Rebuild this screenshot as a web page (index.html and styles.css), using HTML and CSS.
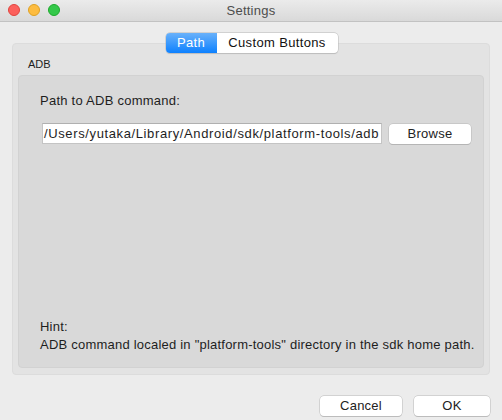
FILE: index.html
```html
<!DOCTYPE html>
<html>
<head>
<meta charset="utf-8">
<link rel="stylesheet" href="styles.css">
</head>
<body>
<div class="window">
  <div class="titlebar">
    <div class="lights">
      <span class="light red"></span>
      <span class="light yellow"></span>
      <span class="light green"></span>
    </div>
    <div class="title">Settings</div>
  </div>
  <div class="content">
    <div class="tabs">
      <div class="seg active">Path</div>
      <div class="seg">Custom Buttons</div>
    </div>
    <div class="tabbox">
      <div class="group-label">ADB</div>
      <div class="group">
        <div class="label">Path to ADB command:</div>
        <div class="row">
          <div class="field">/Users/yutaka/Library/Android/sdk/platform-tools/adb</div>
          <div class="btn browse">Browse</div>
        </div>
        <div class="hint">
          <div class="hint-line">Hint:</div>
          <div class="hint-line">ADB command localed in "platform-tools" directory in the sdk home path.</div>
        </div>
      </div>
    </div>
    <div class="footer">
      <div class="btn cancel">Cancel</div>
      <div class="btn ok">OK</div>
    </div>
  </div>
</div>
</body>
</html>
```
FILE: styles.css
```css
* { box-sizing: border-box; }
html, body { margin: 0; padding: 0; }
body {
  width: 502px;
  height: 420px;
  overflow: hidden;
  font-family: "Liberation Sans", Arial, sans-serif;
  font-size: 13px;
  letter-spacing: 0.25px;
  color: #1e1e1e;
  background: #ececec;
}
.window { width: 502px; height: 420px; display: flex; flex-direction: column; }
.titlebar {
  height: 22px;
  background: linear-gradient(#ebebeb, #d9d9d9);
  border-bottom: 1px solid #c2c2c2;
  display: flex;
  align-items: center;
  position: relative;
}
.lights { display: flex; gap: 8px; padding-left: 8px; margin-top: -1px; }
.light { width: 12px; height: 12px; border-radius: 50%; display: block; }
.red { background: #fc605c; border: 0.5px solid #e0443e; }
.yellow { background: #fdbc40; border: 0.5px solid #dea123; }
.green { background: #34c84a; border: 0.5px solid #1daa2c; }
.title {
  position: absolute;
  left: 0; right: 0; top: 0;
  line-height: 22px;
  text-align: center;
  color: #4d4d4d;
}
.content { flex: 1; display: flex; flex-direction: column; padding: 11px 12px 0 12px; }
.tabs {
  display: flex;
  align-self: center;
  margin-left: 1px;
  height: 20px;
  position: relative;
  z-index: 1;
  border-radius: 4px;
  box-shadow: 0 0 0 0.5px #b9b9b9, 0 0.5px 1px rgba(0,0,0,0.15);
  background: #fff;
}
.seg { height: 20px; line-height: 20px; text-align: center; color: #111; letter-spacing: 0.35px; }
.seg:first-child { width: 51px; border-radius: 4px 0 0 4px; }
.seg:last-child { width: 121px; }
.seg.active {
  background: linear-gradient(#69b1fa, #0d81ff);
  color: #fff;
}
.tabbox {
  margin-top: -10px;
  height: 332px;
  background: #e3e3e3;
  border: 1px solid #dcdcdc;
  border-radius: 4px;
  padding: 13px 5px 6px 5px;
  display: flex;
  flex-direction: column;
}
.group-label { font-size: 11px; line-height: 14px; padding-left: 10px; margin-bottom: 4px; letter-spacing: 0; }
.group {
  flex: 1;
  background: #d9d9d9;
  border: 1px solid #d2d2d2;
  border-radius: 4px;
  padding: 17px 12px 13px 21px;
  display: flex;
  flex-direction: column;
}
.label { line-height: 16px; }
.row { display: flex; align-items: center; gap: 7px; margin-top: 14px; }
.field {
  width: 340px;
  height: 21px;
  margin-left: 2px;
  background: #fff;
  border: 1px solid #c4c4c4;
  border-top-color: #b0b0b0;
  line-height: 19px;
  padding-left: 1px;
  letter-spacing: 0.62px;
  white-space: nowrap;
  overflow: hidden;
}
.btn {
  height: 20px;
  line-height: 19px;
  text-align: center;
  background: #fff;
  border-radius: 4px;
  box-shadow: 0 0 0 0.5px #b7b7b7, 0 1px 0.5px rgba(0,0,0,0.18);
  color: #222;
}
.browse { width: 82px; margin-top: 1px; }
.hint { margin-top: auto; margin-right: -8px; }
.hint-line { line-height: 18px; white-space: nowrap; letter-spacing: 0.22px; }
.footer { display: flex; justify-content: flex-end; gap: 12px; padding-top: 21px; }
.cancel { width: 82px; }
.ok { width: 76px; }
```
